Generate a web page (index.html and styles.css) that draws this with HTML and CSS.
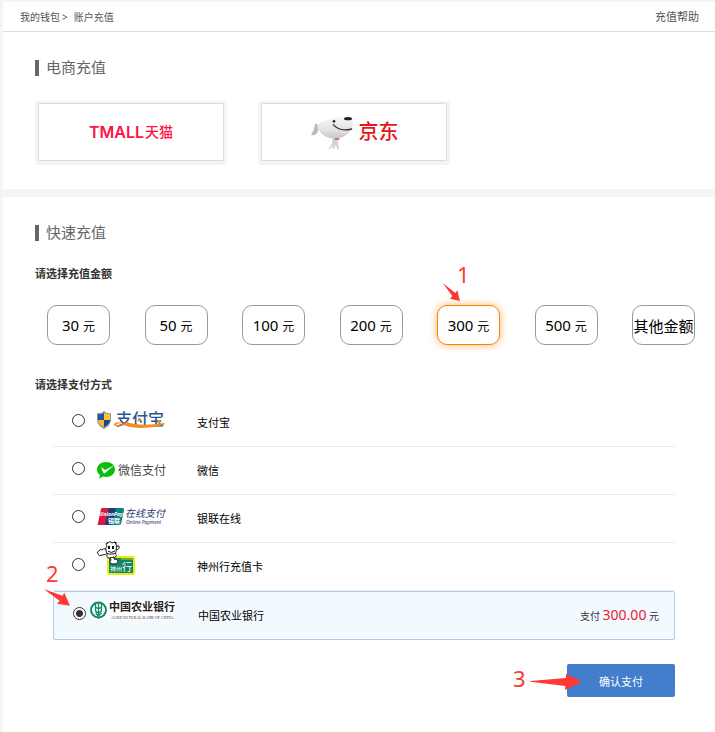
FILE: index.html
```html
<!DOCTYPE html>
<html lang="zh-CN">
<head>
<meta charset="utf-8">
<meta name="viewport" content="width=device-width, initial-scale=1">
<title>账户充值</title>
<link rel="stylesheet" href="styles.css">
</head>
<body>
<header class="topbar">
  <nav class="crumbs"><a href="#">我的钱包</a><span class="sep">&gt;</span><span>账户充值</span></nav>
  <a class="help" href="#">充值帮助</a>
</header>
<main>
  <section class="panel">
    <h2 class="title">电商充值</h2>
    <div class="shops">
      <a class="shop tmall" href="#"><span class="tmall-en">TMALL</span><span class="tmall-cn">天猫</span></a>
      <a class="shop jd" href="#">
        <svg width="44" height="38" viewBox="193 72 132 114" overflow="visible" aria-hidden="true">
          <defs>
            <linearGradient id="dog" x1="0" y1="0" x2="0" y2="1"><stop offset="0" stop-color="#f7f7f7"/><stop offset=".6" stop-color="#e4e4e4"/><stop offset="1" stop-color="#c4c4c4"/></linearGradient>
          </defs>
          <path d="M209 103Q220 107 219 121Q214 136 205 139L196 138Q206 124 209 103Z" fill="#b9b9b9"/>
          <path d="M259 150L275 150L278 162L280 181L275 181L271 167L265 180L260 180L264 168L252 181L249 179L260 162Z" fill="#d2d2d2"/>
          <path d="M214 112C226 91 288 78 318 84C323 98 323 112 317 121C304 142 283 150 266 149C240 148 220 133 214 112Z" fill="url(#dog)"/>
          <ellipse cx="307" cy="89" rx="12" ry="5" fill="#222"/>
          <circle cx="265" cy="97" r="4" fill="#222"/>
          <path d="M263 107Q281 129 318 120" fill="none" stroke="#333" stroke-width="4" stroke-linecap="round"/>
          <path d="M267 150H281" stroke="#d8373c" stroke-width="4"/>
        </svg>
        <span class="jd-cn">京东</span>
      </a>
    </div>
  </section>

  <section class="panel grow">
    <h2 class="title">快速充值</h2>
    <h3 class="label">请选择充值金额</h3>
    <div class="amounts">
      <button type="button" class="amount">30 <small>元</small></button>
      <button type="button" class="amount">50 <small>元</small></button>
      <button type="button" class="amount">100 <small>元</small></button>
      <button type="button" class="amount">200 <small>元</small></button>
      <button type="button" class="amount active">300 <small>元</small>
        <svg class="step step-1" width="34" height="40" aria-hidden="true"><text x="19" y="19">1</text><path transform="translate(-38 -9) scale(.3333)" d="M128 84L166 114L172 106L180 138L150 131L157 123Z"/></svg>
      </button>
      <button type="button" class="amount">500 <small>元</small></button>
      <button type="button" class="amount">其他金额</button>
    </div>

    <h3 class="label">请选择支付方式</h3>
    <div class="methods">
      <label class="method">
        <input type="radio" name="pay">
        <svg class="logo" width="90" height="47" viewBox="0 0 90 47" aria-hidden="true">
          <path d="M15 12Q18 15 22 14V21Q22 26 15 30Q8 26 8 21V14Q12 15 15 12Z" fill="#8795a8"/>
          <path d="M15 14V21H9V15Q12 16 15 14Z" fill="#20539b"/><path d="M15 14Q18 16 21 15V21H15Z" fill="#ffc629"/>
          <path d="M9 21H15V28Q9 25 9 21Z" fill="#ffb51e"/><path d="M15 21H21Q21 25 15 28Z" fill="#17478b"/>
          <text class="alipay" x="27" y="26">支付宝</text>
          <circle cx="50" cy="21" r="1.500" fill="#f7931e"/>
          <circle cx="70" cy="23" r="1.500" fill="#f7931e"/>
          <path d="M35 24Q25 22 25 26Q27 29 36 26Q49 32 75 26L76 24Q51 28 38 23Q30 27 27 26Q27 24 35 24Z" fill="#f58d1f"/>
        </svg>
        <span class="name">支付宝</span>
      </label>
      <label class="method">
        <input type="radio" name="pay">
        <svg class="logo" width="90" height="47" viewBox="0 0 90 47" aria-hidden="true">
          <path d="M17 15C22 15 26 18 26 22.500C26 27 22 30 17 30L14 29.500L10 31.500L11 28C9 27 8 25 8 22.500C8 18 12 15 17 15Z" fill="#0abf0a"/>
          <path d="M12 20L16 23L25 18.500L15.500 26.500Q14 26 12 20Z" fill="#fff"/>
          <text class="wechat" x="29" y="28">微信支付</text>
        </svg>
        <span class="name">微信</span>
      </label>
      <label class="method">
        <input type="radio" name="pay">
        <svg class="logo" width="90" height="47" viewBox="0 0 90 47" aria-hidden="true">
          <path d="M13 13H22L18 30H10Q8 30 9 28L12 14Z" fill="#d7193f"/>
          <path d="M20 13H29L25 30H16Z" fill="#173e7b"/>
          <path d="M27 13H34Q35 13 35 15L32 29Q31 30 30 30H23Z" fill="#08847f"/>
          <text class="union-en" x="11" y="21">UnionPay</text>
          <text class="union-cn" x="19" y="28">银联</text>
          <text class="online-cn" x="36" y="22">在线支付</text>
          <text class="online-en" x="37" y="29">Online Payment</text>
        </svg>
        <span class="name">银联在线</span>
      </label>
      <label class="method">
        <input type="radio" name="pay">
        <svg class="logo" width="90" height="47" viewBox="0 0 90 47" aria-hidden="true">
          <rect x="18" y="13" width="28" height="19" rx="2" fill="#e8ef0b"/>
          <rect x="20" y="15" width="24" height="15" rx="1" fill="#128568"/>
          <path d="M32 16H44" stroke="#b9d51c" stroke-width="1"/>
          <text class="card-s" x="21" y="28">神州</text><text class="card-l" x="33" y="28">行</text>
          <g fill="#fff" stroke="#222" stroke-width="1">
            <path d="M17 6Q14 5 13 7Q11 5 10 8Q7 9 9 11Q10 14 13 12Q17 12 18 10Z"/>
            <path d="M26 7Q31 7 30 3Q28 2 28 4L26 5"/>
            <path d="M19 10Q16 14 20 15L25 15Q29 13 26 10Z"/>
            <path d="M18 3Q16 0 19 0Q21 -3 23 0Q26 -2 27 1Q28 4 27 7Q28 11 23 11Q18 12 17 8Q16 5 18 3Z"/>
            <path d="M21 15L22 17Q19 20 24 21Q29 21 29 18Q28 16 25 16V14Z"/>
          </g>
          <path d="M20 3V6M24 3V6" stroke="#111" stroke-width="2"/>
          <path d="M19 8Q22 11 26 8M19 -1L17 1M25 -1L28 0" fill="none" stroke="#111"/>
        </svg>
        <span class="name">神州行充值卡</span>
      </label>
      <label class="method chosen">
        <input type="radio" name="pay" checked>
        <svg class="logo" width="90" height="47" viewBox="0 0 90 47" aria-hidden="true">
          <rect x="0" y="8" width="85" height="20" fill="#fff"/>
          <circle cx="8.500" cy="18" r="7.500" fill="none" stroke="#128a6a" stroke-width="2"/>
          <path d="M8.500 10V27M5.500 12V18Q5.500 20 8.500 21Q11.500 20 11.500 18V12M5.500 21L8.500 24L11.500 21M5.500 15L8.500 17L11.500 15" fill="none" stroke="#128a6a" stroke-width="1.300"/>
          <text class="abc-cn" x="19" y="19">中国农业银行</text>
          <text class="abc-en" x="21" y="27">AGRICULTURAL BANK OF CHINA</text>
        </svg>
        <span class="name">中国农业银行</span>
        <span class="total">支付 <b>300.00</b> <span class="unit">元</span></span>
        <svg class="step step-2" width="32" height="48" aria-hidden="true"><text x="4" y="20">2</text><path transform="translate(-12 -2) scale(.3333)" d="M41 87L97 107L103 98L120 137L81 131L89 122Z"/></svg>
      </label>
    </div>
    <div class="actions">
      <button type="submit" class="submit">确认支付
        <svg class="step step-3" width="74" height="33" aria-hidden="true"><text x="3" y="23">3</text><path transform="translate(-20 -84) scale(.3333)" d="M121 303L228 294V281L276 306L225 330L226 318L121 305Z"/></svg>
      </button>
    </div>
  </section>
</main>
</body>
</html>
```
FILE: styles.css
```css
* { box-sizing: border-box; }

body {
  display: flex;
  flex-direction: column;
  min-height: 100vh;
  margin: 0;
  padding: 2px 0 0 3px;
  background: #f4f4f4;
  color: #000;
  font-family: "Noto Sans", "Noto Sans CJK SC", sans-serif;
  font-size: 11px;
  line-height: 16px;
}

a { color: inherit; text-decoration: none; }
button { font-family: inherit; cursor: pointer; }

.topbar {
  display: flex;
  justify-content: space-between;
  align-items: center;
  height: 30px;
  padding: 0 16px 0 17px;
  background: #fff;
  border-bottom: 1px solid #ddd;
  color: #555;
}
.crumbs { font-size: 10px; }
.sep { margin: 0 6px 0 2px; }

main { display: flex; flex: 1; flex-direction: column; gap: 8px; }
.panel { padding: 28px 20px 28px 32px; background: #fff; }
.grow { flex: 1; }

.title {
  height: 16px;
  margin: 0;
  padding-left: 7px;
  border-left: 4px solid #666;
  color: #666;
  font-size: 15px;
  font-weight: 400;
  line-height: 14px;
}

.shops { display: flex; gap: 37px; margin: 27px 0 0 3px; }
.shop {
  display: flex;
  align-items: center;
  justify-content: center;
  width: 186px;
  height: 58px;
  background: #fff;
  border: 1px solid #dcdcdc;
  border-radius: 1px;
  box-shadow: 0 1px 0 3px #f4f4f4;
}
.tmall { gap: 1px; color: #ff1244; }
.tmall-en { font: 600 16px Inter, sans-serif; }
.tmall-cn { font-size: 14px; font-weight: 500; }
.jd { gap: 5px; color: #e6171c; }
.jd-cn { font-size: 20px; font-weight: 500; }

.label { margin: 25px 0 0; color: #333; font-size: 11px; font-weight: 700; }
.amounts {
  display: flex;
  justify-content: space-between;
  margin: 23px 0 0 12px;
}
.amounts + .label { margin-top: 32px; }
.amount {
  position: relative;
  width: 63px;
  height: 40px;
  padding: 0;
  background: #fff;
  border: 1px solid #999;
  border-radius: 10px;
  color: #000;
  font-size: 15px;
  white-space: nowrap;
}
.amount small { font-size: 12px; }
.amount.active { border-color: #ff8000; box-shadow: 0 0 8px #ffb66e; }

.methods { margin: 6px 20px 0 18px; }
.method {
  position: relative;
  display: flex;
  align-items: center;
  height: 48px;
  padding: 0 15px 0 19px;
  border-bottom: 1px solid #eaeaea;
}
.method input {
  appearance: none;
  width: 13px;
  height: 13px;
  margin: 0 4px 4px 0;
  background: #fff;
  border: 1px solid #333;
  border-radius: 50%;
}
.method input:checked {
  background: radial-gradient(circle, #333 3px, #fff 4px);
}
.logo { flex: none; margin-right: 18px; overflow: visible; }
.chosen {
  height: 49px;
  background: #f2f9ff;
  border: 1px solid #b1cde8;
  border-radius: 2px;
}
.total { margin-left: auto; color: #333; font-size: 10px; }
.total b { color: #e8222f; font-size: 14px; font-weight: 400; }

.alipay { fill: #2b568f; font-size: 16px; font-weight: 500; }
.wechat { fill: #444; font-size: 12px; }
.union-en { fill: #fff; font-size: 5px; font-weight: 700; font-style: italic; }
.union-cn { fill: #fff; font-size: 6px; font-weight: 700; }
.online-cn { fill: #26336d; font-size: 10px; font-style: italic; }
.online-en { fill: #26336d; font-size: 5px; font-style: italic; }
.card-s { fill: #fff; font-size: 6px; }
.card-l { fill: #fff; font-size: 10px; }
.abc-cn { fill: #222; font-size: 11px; font-weight: 700; }
.abc-en { fill: #333; font-family: "Liberation Serif", serif; font-size: 4px; }

.actions { display: flex; justify-content: flex-end; margin: 24px 20px 0 0; }
.submit {
  position: relative;
  width: 108px;
  height: 33px;
  padding: 0;
  background: #427ecb;
  border: 0;
  border-radius: 2px;
  color: #fff;
  font-size: 11px;
}

.step { position: absolute; overflow: visible; fill: #ff3835; font-size: 22px; pointer-events: none; }
.step-1 { left: 0; top: -42px; }
.step-2 { left: -12px; top: -30px; }
.step-3 { left: -57px; top: 0; }
```
